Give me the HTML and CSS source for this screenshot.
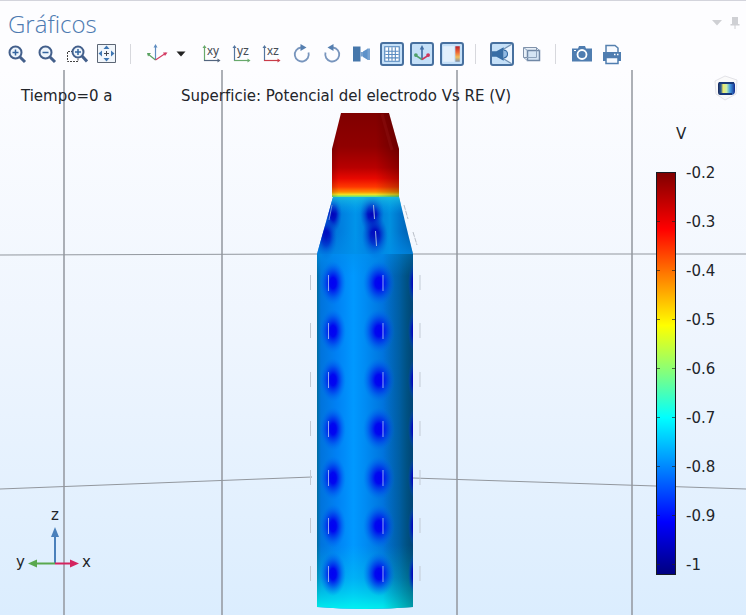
FILE: index.html
```html
<!DOCTYPE html>
<html lang="es">
<head>
<meta charset="utf-8">
<title>Gráficos</title>
<link rel="stylesheet" href="styles.css">
</head>
<body>
<main class="panel">
  <header class="panel-head">
    <h1>Gráficos</h1>
    <div class="panel-actions">
      <button type="button" aria-label="Menú"><svg width="10" height="6" viewBox="0 0 10 6"><path d="M0 0h10L5 5.500z" fill="#cfd0d4"/></svg></button>
      <button type="button" aria-label="Anclar"><svg width="10" height="12" viewBox="0 0 10 12"><path d="M2 0h6v7h1.500v1.500h-9V7H2z" fill="#cfd0d4"/><path d="M5 8v4" stroke="#cfd0d4"/></svg></button>
    </div>
  </header>

  <div class="toolbar" role="toolbar" aria-label="Herramientas">
    <button type="button" aria-label="Acercar"><svg viewBox="0 0 22 22"><circle cx="9.500" cy="9.500" r="6" fill="#eef5fc" stroke="#435f8b" stroke-width="2"/><path d="M14 14l5 5" stroke="#435f8b" stroke-width="3"/><path d="M6.500 9.500h6M9.500 6.500v6" stroke="#34659f" stroke-width="1.500"/></svg></button>
    <button type="button" aria-label="Alejar"><svg viewBox="0 0 22 22"><circle cx="9.500" cy="9.500" r="6" fill="#eef5fc" stroke="#435f8b" stroke-width="2"/><path d="M14 14l5 5" stroke="#435f8b" stroke-width="3"/><path d="M6.500 9.500h6" stroke="#34659f" stroke-width="1.500"/></svg></button>
    <button type="button" aria-label="Zoom a la selección"><svg viewBox="0 0 22 22"><path d="M7 8.500H1.500v10h10.500v-4" fill="none" stroke="#444" stroke-dasharray="2 1"/><circle cx="12" cy="9" r="5.500" fill="#eef5fc" stroke="#435f8b" stroke-width="2"/><path d="M16 13l5 5.500" stroke="#435f8b" stroke-width="3"/><path d="M9 9h6M12 6v6" stroke="#34659f" stroke-width="1.500"/></svg></button>
    <button type="button" aria-label="Ajustar a la ventana"><svg viewBox="0 0 22 22"><path d="M1.500 1.500h18v18h-18z" fill="#f1f6fb" stroke="#5c6675"/><path d="M8 10.500h5M10.500 8v5" stroke="#444b55"/><path d="M10.500 2.500l3 3.500h-6zM10.500 18.500l3-3.500h-6zM2.500 10.500L6 7.500v6zM18.500 10.500L15 7.500v6z" fill="#3f77b4"/></svg></button>
    <span class="sep"></span>
    <button type="button" aria-label="Vista predeterminada"><svg viewBox="0 0 22 22"><path d="M9.500 3v14" stroke="#5e8cc0" stroke-width="1.200"/><path d="M9.500 17L2 11" stroke="#59a160" stroke-width="1.200"/><path d="M9.500 17L20 10" stroke="#d43b63" stroke-width="1.200"/><path d="M9.500 1L7.500 4.500h4z" fill="#5e8cc0"/><path d="M1 10h4l-3 3.500z" fill="#59a160"/><path d="M21.500 9.500h-4.500l2 3.500z" fill="#d43b63"/></svg></button>
    <button type="button" class="caret" aria-label="Más vistas"><svg viewBox="0 0 18 22"><path d="M4.500 8.500h9L9 13.500z" fill="#222"/></svg></button>
    <button type="button" aria-label="Vista XY"><svg viewBox="0 0 22 22"><path d="M3.500 18V4" stroke="#68a96c" stroke-width="1.200"/><path d="M3 17.500h14" stroke="#53657f" stroke-width="1.200"/><path d="M3.500 2l-2 3h4z" fill="#68a96c"/><path d="M19.500 17.500l-3-2v4z" fill="#53657f"/><text x="6" y="12">xy</text></svg></button>
    <button type="button" aria-label="Vista YZ"><svg viewBox="0 0 22 22"><path d="M3.500 18V4" stroke="#53759f" stroke-width="1.200"/><path d="M3 17.500h14" stroke="#68a96c" stroke-width="1.200"/><path d="M3.500 2l-2 3h4z" fill="#53759f"/><path d="M19.500 17.500l-3-2v4z" fill="#68a96c"/><text x="6" y="12">yz</text></svg></button>
    <button type="button" aria-label="Vista XZ"><svg viewBox="0 0 22 22"><path d="M3.500 18V4" stroke="#53759f" stroke-width="1.200"/><path d="M3 17.500h14" stroke="#c93c49" stroke-width="1.200"/><path d="M3.500 2l-2 3h4z" fill="#53759f"/><path d="M19.500 17.500l-3-2v4z" fill="#c93c49"/><text x="6" y="12">xz</text></svg></button>
    <button type="button" aria-label="Girar a la derecha"><svg viewBox="0 0 22 22"><path d="M10 4.500a7 7 0 1 0 7.500 5" fill="none" stroke="#7895bd" stroke-width="1.800"/><path d="M9.500 1l6 3.500-6 3.500z" fill="#557fb0"/></svg></button>
    <button type="button" aria-label="Girar a la izquierda"><svg viewBox="0 0 22 22"><path d="M12 4.500a7 7 0 1 1-7.500 5" fill="none" stroke="#7895bd" stroke-width="1.800"/><path d="M12.500 1l-6 3.500 6 3.500z" fill="#557fb0"/></svg></button>
    <button type="button" aria-label="Proyección"><svg viewBox="0 0 22 22"><path d="M2 3.500h7.500v15H2z" fill="#4677ab"/><path d="M9.500 9h3v4.500h-3z" fill="#77a1cf"/><path d="M12 8.500l5-3v11.500l-5-3z" fill="#5d91c9"/><path d="M16.500 5.500h2.500v11.500h-2.500z" fill="#79a3d1"/></svg></button>
    <button type="button" aria-label="Cuadrícula" aria-pressed="true"><svg viewBox="2 2 18 18"><path d="M4.500 4.500h13v13h-13z" fill="#fff" stroke="#4f83bc"/><path d="M5 8.500h12M5 11.500h12M5 14.500h12M8 5v12M11 5v12M14 5v12" stroke="#5b8cc1"/></svg></button>
    <button type="button" aria-label="Ejes" aria-pressed="true"><svg viewBox="2 2 18 18"><path d="M11 5v11" stroke="#426fa5" stroke-width="1.500"/><path d="M11 16l-6-4" stroke="#51a16b" stroke-width="1.500"/><path d="M11 16l6-4" stroke="#ce365c" stroke-width="1.500"/><path d="M11 3L9 7h4z" fill="#426fa5"/><circle cx="5.500" cy="12" r="1.700" fill="#51a16b"/><circle cx="16.500" cy="12" r="1.700" fill="#ce365c"/></svg></button>
    <button type="button" aria-label="Leyenda de color" aria-pressed="true"><svg viewBox="2 2 18 18"><defs><linearGradient id="mini" x2="0" y2="1"><stop stop-color="#b81e2b"/><stop offset=".4" stop-color="#ef6a35"/><stop offset=".7" stop-color="#f2bd58"/><stop offset="1" stop-color="#7f8fa8"/></linearGradient></defs><path d="M3 4h10v14H3z" fill="#e3f0fc"/><path d="M14 4h4v14h-4z" fill="url(#mini)"/></svg></button>
    <span class="sep"></span>
    <button type="button" aria-label="Luz de escena" aria-pressed="true"><svg viewBox="2 2 18 18"><path d="M12 7l8-5v18l-8-5z" fill="#eaf4ff"/><path d="M12 7l8-5M12 15l8 5" stroke="#7594b5"/><path d="M2 8.500h4L12.500 5v12l-6.500-3.500H2z" fill="#376da5"/><path d="M12.500 7.500a3.500 3.500 0 0 1 0 7" fill="#8fb9e3" stroke="#376da5"/></svg></button>
    <button type="button" aria-label="Transparencia"><svg viewBox="0 0 22 22"><path d="M2.500 4.500h13v10h-13z" fill="#e8f0f8" stroke="#8192aa"/><path d="M6.500 7.500h12v10h-12z" fill="#d4e5f5" stroke="#7088a6" stroke-width="1.500"/><path d="M2.500 4.500l4 3M15.500 4.500l3 3M2.500 14.500l4 3M6 14.500h9.500v-7" fill="none" stroke="#8da3bd"/></svg></button>
    <span class="sep"></span>
    <button type="button" aria-label="Captura de imagen"><svg viewBox="0 0 22 22"><path d="M1 5.500h6l1-2.500h6l1 2.500h6v13H1z" fill="#4f7db0"/><circle cx="11" cy="11.500" r="4.500" fill="#4f7db0" stroke="#fff" stroke-width="1.800"/><path d="M3 7.500h2" stroke="#fff"/></svg></button>
    <button type="button" aria-label="Imprimir"><svg viewBox="0 0 22 22"><path d="M5 9V2.500h9L17 5v4" fill="#f7faff" stroke="#5580ae" stroke-width="1.500"/><path d="M2 9h18v9H2z" fill="#4f7db0"/><path d="M5 14.500h12v6H5z" fill="#f7faff" stroke="#4f7db0" stroke-width="1.500"/><path d="M13 11.500h1.500M16 11.500h1.500" stroke="#fff" stroke-width="1.500"/></svg></button>
  </div>

  <section class="plot">
    <svg class="scene" viewBox="0 0 746 545" role="img" aria-label="Potencial del electrodo en la superficie">
      <defs>
        <linearGradient id="body" gradientUnits="userSpaceOnUse" x1="317" x2="413"><stop stop-color="#006c9c"/><stop offset=".04" stop-color="#0074dc"/><stop offset=".2" stop-color="#0080f4"/><stop offset=".38" stop-color="#0099ff"/><stop offset=".5" stop-color="#008cf4"/><stop offset=".7" stop-color="#0072dc"/><stop offset=".86" stop-color="#0068b8"/><stop offset=".94" stop-color="#005a94"/><stop offset="1" stop-color="#00488c"/></linearGradient>
        <linearGradient id="cone" gradientUnits="userSpaceOnUse" x1="317" x2="413"><stop stop-color="#0060c8"/><stop offset=".15" stop-color="#0070d8"/><stop offset=".4" stop-color="#0094ea"/><stop offset=".58" stop-color="#0070d8"/><stop offset=".76" stop-color="#0090e0"/><stop offset=".86" stop-color="#0074cc"/><stop offset="1" stop-color="#005aa8"/></linearGradient>
        <linearGradient id="rim" x2="0" y2="1"><stop stop-color="#20c8e0" stop-opacity=".8"/><stop offset="1" stop-color="#00a8f0" stop-opacity="0"/></linearGradient>
        <linearGradient id="shoulder" x2="0" y2="1"><stop stop-color="#0090ec" stop-opacity="0"/><stop offset=".5" stop-color="#0090ec" stop-opacity=".6"/><stop offset="1" stop-color="#0090ec" stop-opacity="0"/></linearGradient>
        <linearGradient id="foot" x2="0" y2="1"><stop stop-color="#00e0e0" stop-opacity="0"/><stop offset=".5" stop-color="#00e0e8" stop-opacity=".35"/><stop offset="1" stop-color="#00fff0" stop-opacity=".92"/></linearGradient>
        <linearGradient id="head" x2="0" y2="1"><stop stop-color="#800000"/><stop offset=".4" stop-color="#900000"/><stop offset=".65" stop-color="#b80000"/><stop offset=".78" stop-color="#e80800"/><stop offset=".88" stop-color="#ff3800"/><stop offset=".94" stop-color="#ff8b00"/><stop offset=".97" stop-color="#f0e020"/><stop offset="1" stop-color="#50e890"/></linearGradient>
        <linearGradient id="shade"><stop stop-color="#000" stop-opacity=".15"/><stop offset=".1" stop-color="#000" stop-opacity="0"/><stop offset=".65" stop-color="#000" stop-opacity="0"/><stop offset="1" stop-color="#000" stop-opacity=".25"/></linearGradient>
        <linearGradient id="side"><stop stop-color="#004060" stop-opacity="0"/><stop offset="1" stop-color="#004060" stop-opacity=".45"/></linearGradient>
        <radialGradient id="spot"><stop stop-color="#0000f4"/><stop offset=".25" stop-color="#0004f0" stop-opacity=".97"/><stop offset=".55" stop-color="#0028ec" stop-opacity=".6"/><stop offset="1" stop-color="#0068f0" stop-opacity="0"/></radialGradient>
        <radialGradient id="darkspot"><stop stop-color="#0000b8"/><stop offset=".35" stop-color="#0008c0" stop-opacity=".9"/><stop offset="1" stop-color="#0050d0" stop-opacity="0"/></radialGradient>
        <clipPath id="hull"><path d="M333 127h66l14 57v353q-48 4-96 0V184z"/></clipPath>
        <g id="row">
          <ellipse cx="333" cy="0" rx="13" ry="22" fill="url(#spot)"/>
          <ellipse cx="379" cy="0" rx="16" ry="22" fill="url(#spot)"/>
          <ellipse cx="414" cy="0" rx="6" ry="20" fill="url(#darkspot)"/>
          <path d="M328.500-8V8M383-8V8" stroke="#8caaf0"/>
        </g>
        <path id="outer" d="M310.500-8V7M420-8V7" stroke="#c3cbd5"/>
      </defs>

      <g fill="none" stroke="#92979e">
        <path d="M64 0v545M222 0v545M457 0v545M632 0v545" stroke-width="1.500"/>
        <path d="M0 185l317-1M413 184h333M0 419l312-12M413 408l333 11"/>
      </g>

      <path d="M341 43h48l10 36v48h-67V79z" fill="url(#head)"/>
      <path d="M341 43h48l10 36v48h-67V79z" fill="url(#shade)"/>
      <path d="M382 44l10 36" stroke="#a02020" stroke-width="3" opacity=".25"/>

      <g clip-path="url(#hull)">
        <path d="M310 120h110v65H310z" fill="url(#cone)"/>
        <path d="M310 184h110v361H310z" fill="url(#body)"/>
        <ellipse cx="333" cy="143" rx="9" ry="20" fill="url(#darkspot)"/>
        <ellipse cx="326" cy="168" rx="11" ry="22" fill="url(#darkspot)"/>
        <ellipse cx="372" cy="143" rx="12" ry="22" fill="url(#darkspot)"/>
        <ellipse cx="375" cy="167" rx="13" ry="22" fill="url(#darkspot)"/>
        <path d="M310 162h110v44H310z" fill="url(#shoulder)"/>
        <path d="M310 126h110v18H310z" fill="url(#rim)"/>
        <path d="M373.500 135l1 14M375.500 161l1 15" stroke="#9bb4df"/>
        <path d="M332 135l-3 15" stroke="#6c8edb"/>
        <path d="M310 475h110v66H310z" fill="url(#foot)"/>
        <path d="M383 184h30v361h-30z" fill="url(#side)"/>
        <use href="#row" y="213"/><use href="#row" y="261"/><use href="#row" y="310"/><use href="#row" y="359"/><use href="#row" y="408"/><use href="#row" y="456"/><use href="#row" y="504"/>
      </g>
      <use href="#outer" y="213"/><use href="#outer" y="261"/><use href="#outer" y="310"/><use href="#outer" y="359"/><use href="#outer" y="408"/><use href="#outer" y="456"/><use href="#outer" y="504"/>
      <path d="M404 135l4 14M413 162l4 13" stroke="#b8bec8" stroke-dasharray="5 1"/>

      <g>
        <path d="M55 493v-30" stroke="#4a80bb" stroke-width="2"/><path d="M55 457l4 10h-8z" fill="#4a80bb"/>
        <path d="M55 493.500H35" stroke="#59a84e" stroke-width="2"/><path d="M28 493.500l9-4v8z" fill="#59a84e"/>
        <path d="M55 493.500h17" stroke="#d4245f" stroke-width="2"/><path d="M79 493.500l-9-4v8z" fill="#d4245f"/>
        <text x="51" y="450">z</text><text x="16" y="497">y</text><text x="82" y="497">x</text>
      </g>
    </svg>

    <div class="captions">
      <p>Tiempo=0 a</p>
      <h2>Superficie: Potencial del electrodo Vs RE (V)</h2>
      <svg class="logo" width="26" height="26" viewBox="0 0 26 26" aria-hidden="true"><defs><linearGradient id="cube"><stop stop-color="#16265c"/><stop offset=".18" stop-color="#305f92"/><stop offset=".3" stop-color="#f0e96c"/><stop offset=".5" stop-color="#c9eea6"/><stop offset=".7" stop-color="#46a0e4"/><stop offset="1" stop-color="#112a8c"/></linearGradient></defs><path d="M2 6L12 1l12 4-1 14-11 6-9-6z" fill="#fafafa" stroke="#e3e3e8"/><path d="M7 7h12q3 0 3 3v6q0 4-4 4H7q-2 0-2-3V9q0-2 2-2z" fill="url(#cube)"/><path d="M6 8h15M7 19h12" stroke="#183878" stroke-width="2"/></svg>
    </div>

    <div class="legend">
      <p>V</p>
      <div class="scale">
        <div class="bar"></div>
        <ol><li>-0.2</li><li>-0.3</li><li>-0.4</li><li>-0.5</li><li>-0.6</li><li>-0.7</li><li>-0.8</li><li>-0.9</li><li>-1</li></ol>
      </div>
    </div>
  </section>
</main>
</body>
</html>
```
FILE: styles.css
```css
* { box-sizing: border-box; }

body {
  margin: 0;
  background: #fdfdff;
  color: #22252a;
  font-family: "DejaVu Sans", sans-serif;
  font-size: 15px;
}

h1, h2, p, ol { margin: 0; padding: 0; font-weight: 400; }

.panel {
  display: flex;
  flex-direction: column;
  min-height: 100vh;
  border-top: 1px solid #d3d4dc;
}

.panel-head {
  display: flex;
  justify-content: space-between;
  height: 38px;
  padding: 0 6px 0 8px;
}

.panel-head h1 {
  padding-top: 5px;
  color: #4d7ab1;
  font: 300 24px/36px "Open Sans", sans-serif;
}

.panel-actions {
  display: flex;
  align-items: center;
  gap: 8px;
  padding-top: 6px;
}

button {
  display: flex;
  align-items: center;
  justify-content: center;
  padding: 0;
  border: 0;
  background: none;
}

.toolbar {
  display: flex;
  align-items: center;
  height: 31px;
  padding: 0 0 1px 2px;
}

.toolbar button { width: 30px; height: 30px; }
.toolbar svg { width: 22px; height: 22px; fill: none; }
.toolbar text { fill: #454c55; font-size: 12px; }
.toolbar .caret { width: 25px; justify-content: flex-start; }
.toolbar .caret svg { width: 18px; }

.toolbar button[aria-pressed="true"] svg {
  width: 24px;
  height: 24px;
  border: 2px solid #47709f;
  border-radius: 3px;
  background: #c5e0f8;
}

.sep {
  width: 20px;
  height: 20px;
  background: linear-gradient(#d7d8dd, #d7d8dd) 8px 0 / 1px 100% no-repeat;
}

.plot {
  position: relative;
  flex: 1;
  background: linear-gradient(#fdfdff, #eef5fe 50%, #dbedfe);
}

.scene { display: block; width: 100%; height: auto; }
.scene text { fill: #22252a; font-size: 15px; }

.captions {
  position: absolute;
  top: 5px;
  left: 21px;
  right: 7px;
  display: flex;
  align-items: center;
}

.captions p { width: 160px; }
.captions h2 { font-size: 15px; line-height: 42px; }
.logo { margin-left: auto; margin-bottom: 16px; }

.legend {
  position: absolute;
  top: 54px;
  right: 0;
  width: 90px;
}

.legend p { padding-left: 20px; line-height: 20px; }
.scale { display: flex; gap: 10px; }

.bar {
  width: 20px;
  height: 403px;
  margin-top: 28px;
  border: 1px solid #181c24;
  background:
    repeating-linear-gradient(transparent 0 48px, #222a 48px 49px) 0 0 / 3px 100% no-repeat,
    repeating-linear-gradient(transparent 0 48px, #222a 48px 49px) 100% 0 / 3px 100% no-repeat,
    linear-gradient(#800000, #f00 14%, #ff7800 25%, #ff0 38%, #80ff80 50%, #0ff 61%, #0080ff 74%, #00f 87%, #000080);
}

.scale ol { padding-top: 5px; list-style: none; }
.scale li { height: 49px; line-height: 49px; }
```
